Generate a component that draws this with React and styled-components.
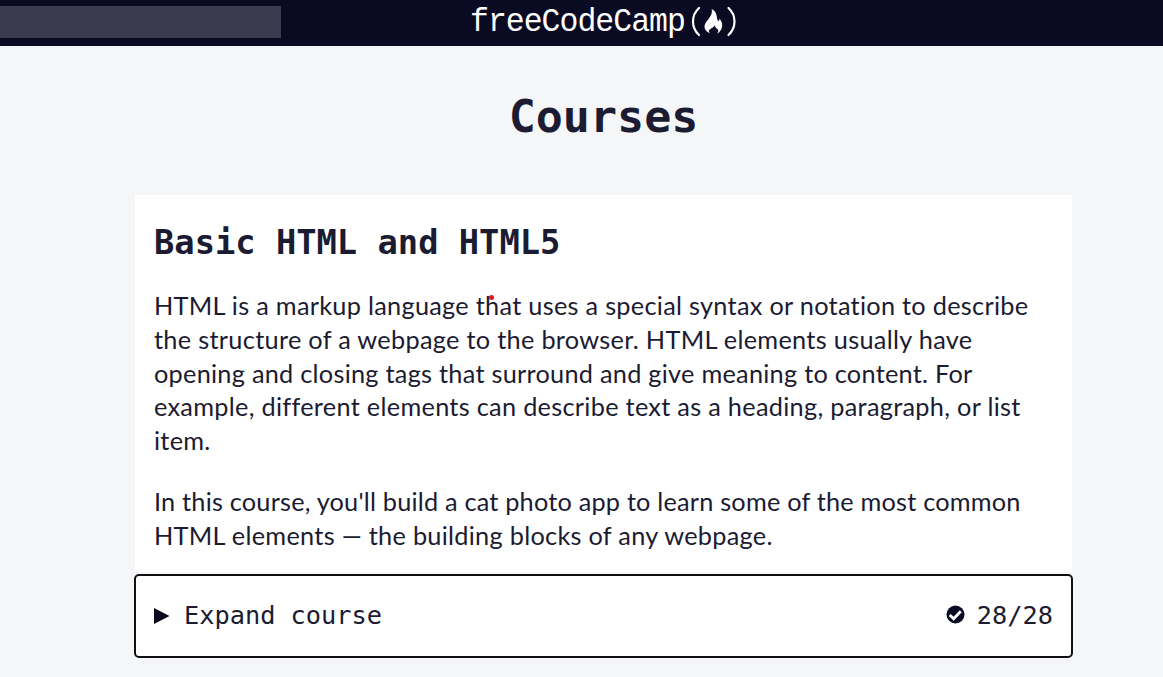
import React from 'react';
import styled, { createGlobalStyle } from 'styled-components';

const GlobalStyle = createGlobalStyle`
  * { box-sizing: border-box; }
  body {
    margin: 0;
    background: #f5f6f7;
    color: #1b1b32;
    font-family: Lato, sans-serif;
    font-size: 25.3px;
    overflow: hidden;
  }
`;

const mono = `"DejaVu Sans Mono", monospace`;

const Page = styled.div`
  height: 677px;
  overflow: hidden;
`;

const Header = styled.header`
  height: 46px;
  background: #0a0a23;
  display: grid;
  grid-template-columns: 470px auto 1fr;
  align-items: start;
`;

const SearchBar = styled.div`
  width: 281px;
  height: 32px;
  margin-top: 6px;
  background: #3b3b4f;
`;

const Logo = styled.div`
  height: 46px;
  display: flex;
  align-items: flex-start;
  color: #fff;
`;

const Wordmark = styled.span`
  font-family: "Liberation Mono", monospace;
  font-size: 31.5px;
  letter-spacing: -1px;
  line-height: 40px;
  width: 220px;
  padding-top: 2px;
  transform: scaleY(1.08);
  white-space: nowrap;
`;

const Flame = styled.svg`
  display: block;
  width: 48px;
  height: 40px;
`;

const Main = styled.main`
  width: 937px;
  margin-left: 135px;
  display: flex;
  flex-direction: column;
`;

const PageTitle = styled.h1`
  margin: 44px 0 0;
  height: 105px;
  line-height: 54px;
  font-family: ${mono};
  font-size: 45px;
  font-weight: 700;
  text-align: center;
`;

const Card = styled.section`
  height: 377px;
  padding: 28px 19px 0;
  background: #fff;
`;

const CardTitle = styled.h2`
  margin: 0 0 26px;
  font-family: ${mono};
  font-size: 33.75px;
  line-height: 40px;
  font-weight: 700;
`;

const Text = styled.p`
  margin: 0 0 27px;
  line-height: 33.75px;
  white-space: nowrap;
  font-variant-ligatures: none;
`;

const Line = styled.span`
  display: block;
  letter-spacing: ${(p) => p.$tracking}px;
`;

const ExpandButton = styled.button`
  height: 84px;
  margin: 2px -1px 0;
  padding: 0 18px;
  display: flex;
  align-items: center;
  justify-content: space-between;
  background: #fff;
  border: 2px solid #101014;
  border-radius: 5px;
  color: #1b1b32;
  font-family: ${mono};
  font-size: 25.3px;
  line-height: 34px;
`;

const Group = styled.span`
  display: flex;
  align-items: center;
  gap: ${(p) => p.$gap}px;
`;

const Icon = styled.svg`
  display: block;
  flex: none;
  margin-bottom: ${(p) => p.$raise || 0}px;
`;

const Cursor = styled.i`
  position: absolute;
  left: 489px;
  top: 295px;
  width: 5px;
  height: 5px;
  border-radius: 50%;
  background: #e8141c;
`;

export default function App() {
  return (
    <Page>
      <GlobalStyle />
      <Header>
        <SearchBar />
        <Logo>
          <Wordmark>freeCodeCamp</Wordmark>
          <Flame viewBox="690 0 48 40" aria-hidden="true">
            <g fill="none" stroke="#fff" strokeWidth="2.200" strokeLinecap="round">
              <path d="M699 8Q693 13.500 693 21.500T699 35" />
              <path d="M728.500 8Q734.500 13.500 734.500 21.500T728.500 35" />
            </g>
            <path
              fill="#fff"
              d="M711.500 9C717 11.500 716.500 16 717.500 20C718.500 22 720 21 719 18.500C723 21.500 723 27.500 720.500 30.500C719.500 32 718.500 33 717 33.500C719 31.500 718.500 29.500 717 28.500C715.500 29 716 27 714.500 25.500C714 27.500 710 28.500 709 30.500C708.500 31.500 709.500 33 710.500 33.500C704 31 703 26 706.500 21.500C710 17.500 713 13 711.500 9Z"
            />
          </Flame>
        </Logo>
      </Header>
      <Main>
        <PageTitle>Courses</PageTitle>
        <Card>
          <CardTitle>Basic HTML and HTML5</CardTitle>
          <Text>
            <Line $tracking={0.28}>HTML is a markup language that uses a special syntax or notation to describe</Line>
            <Line $tracking={0.3}>the structure of a webpage to the browser. HTML elements usually have</Line>
            <Line $tracking={0.26}>opening and closing tags that surround and give meaning to content. For</Line>
            <Line $tracking={0.29}>example, different elements can describe text as a heading, paragraph, or list</Line>
            <Line $tracking={0.28}>item.</Line>
          </Text>
          <Text>
            <Line $tracking={0.2}>In this course, you'll build a cat photo app to learn some of the most common</Line>
            <Line $tracking={0.28}>HTML elements — the building blocks of any webpage.</Line>
          </Text>
        </Card>
        <ExpandButton>
          <Group $gap={14}>
            <Icon width="16" height="16" viewBox="0 0 16 16">
              <path d="M0 0L15.500 8L0 16Z" fill="#0a0a23" />
            </Icon>
            Expand course
          </Group>
          <Group $gap={12}>
            <Icon $raise={3} width="19" height="19" viewBox="0 0 19 19">
              <circle cx="9.500" cy="9.500" r="9" fill="#0a0a23" />
              <path d="M3.700 10L7.700 13.700L14.800 6.300" fill="none" stroke="#fff" strokeWidth="2.800" />
            </Icon>
            28/28
          </Group>
        </ExpandButton>
      </Main>
      <Cursor />
    </Page>
  );
}
